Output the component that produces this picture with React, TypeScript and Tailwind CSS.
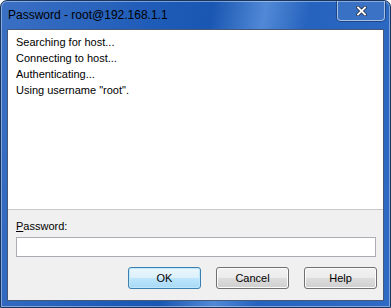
import React from 'react';

const lines = ['Searching for host...', 'Connecting to host...', 'Authenticating...', 'Using username "root".'];

const CloseGlyph = () => (
  <svg width="11" height="10" viewBox="0 0 11 10">
    <path d="M2 1.5 L9 8.5 M9 1.5 L2 8.5" stroke="#2a3550" strokeWidth="3.6" strokeLinecap="square" />
    <path d="M2 1.5 L9 8.5 M9 1.5 L2 8.5" stroke="#ffffff" strokeWidth="1.8" strokeLinecap="square" />
  </svg>
);

const WinButton = ({ label, primary }: { label: string; primary?: boolean }) => (
  <button
    className={`w-[73px] h-[22px] rounded-[3px] border text-[11px] text-black ${
      primary
        ? 'border-[#3c7fb1] bg-[linear-gradient(#ebf6fd_0%,#dbf0fb_50%,#bee6fd_51%,#a7d9f5_100%)] shadow-[inset_0_0_0_1px_#bfe8fc]'
        : 'border-[#707070] bg-[linear-gradient(#f2f2f2_0%,#ebebeb_50%,#dddddd_51%,#cfcfcf_100%)] shadow-[inset_0_0_0_1px_#fcfcfc]'
    }`}
    style={{ fontFamily: '"Liberation Sans", Arial, sans-serif' }}
  >
    {label}
  </button>
);

export default function App() {
  return (
    <div
      className="relative w-[391px] h-[308px] flex flex-col rounded-t-[7px] border border-[#17355f] bg-[linear-gradient(100deg,#3b70c4_0%,#1f5cb8_35%,#1a57b2_48%,#5189d6_60%,#2663be_70%,#2f6bc4_100%)] shadow-[inset_0_0_0_1px_rgba(255,255,255,0.4)] overflow-hidden"
      style={{ fontFamily: '"Liberation Sans", Arial, sans-serif' }}
    >
      <div className="h-[28px] flex items-center pl-[7px] text-[12px] text-black shrink-0">
        Password - root@192.168.1.1
      </div>
      <div className="absolute top-0 right-[5px] w-[48px] h-[20px] rounded-b-[4px] border border-t-0 border-[rgba(255,255,255,0.55)] shadow-[0_0_0_1px_rgba(20,40,80,0.5)] bg-[rgba(255,255,255,0.08)] flex items-center justify-center">
        <CloseGlyph />
      </div>
      <div className="flex-1 mx-[6px] mb-[6px] border border-[#44597a] bg-[#f0f0f0] flex flex-col">
        <div className="h-[180px] bg-white border-b border-[#c8c8c8] pl-[8px] pt-[4px] text-[11px] leading-[16px] text-black">
          {lines.map((l) => (
            <div key={l}>{l}</div>
          ))}
        </div>
        <div className="flex flex-col pl-[8px] pr-[6px] pt-[9px]">
          <div className="text-[11px] leading-[14px] text-black">
            <span className="underline">P</span>assword:
          </div>
          <div className="mt-[4px] h-[20px] w-[360px] bg-white border border-[#abadb3]" />
          <div className="mt-[10px] flex justify-end gap-[15px]">
            <WinButton label="OK" primary />
            <WinButton label="Cancel" />
            <WinButton label="Help" />
          </div>
        </div>
      </div>
    </div>
  );
}
